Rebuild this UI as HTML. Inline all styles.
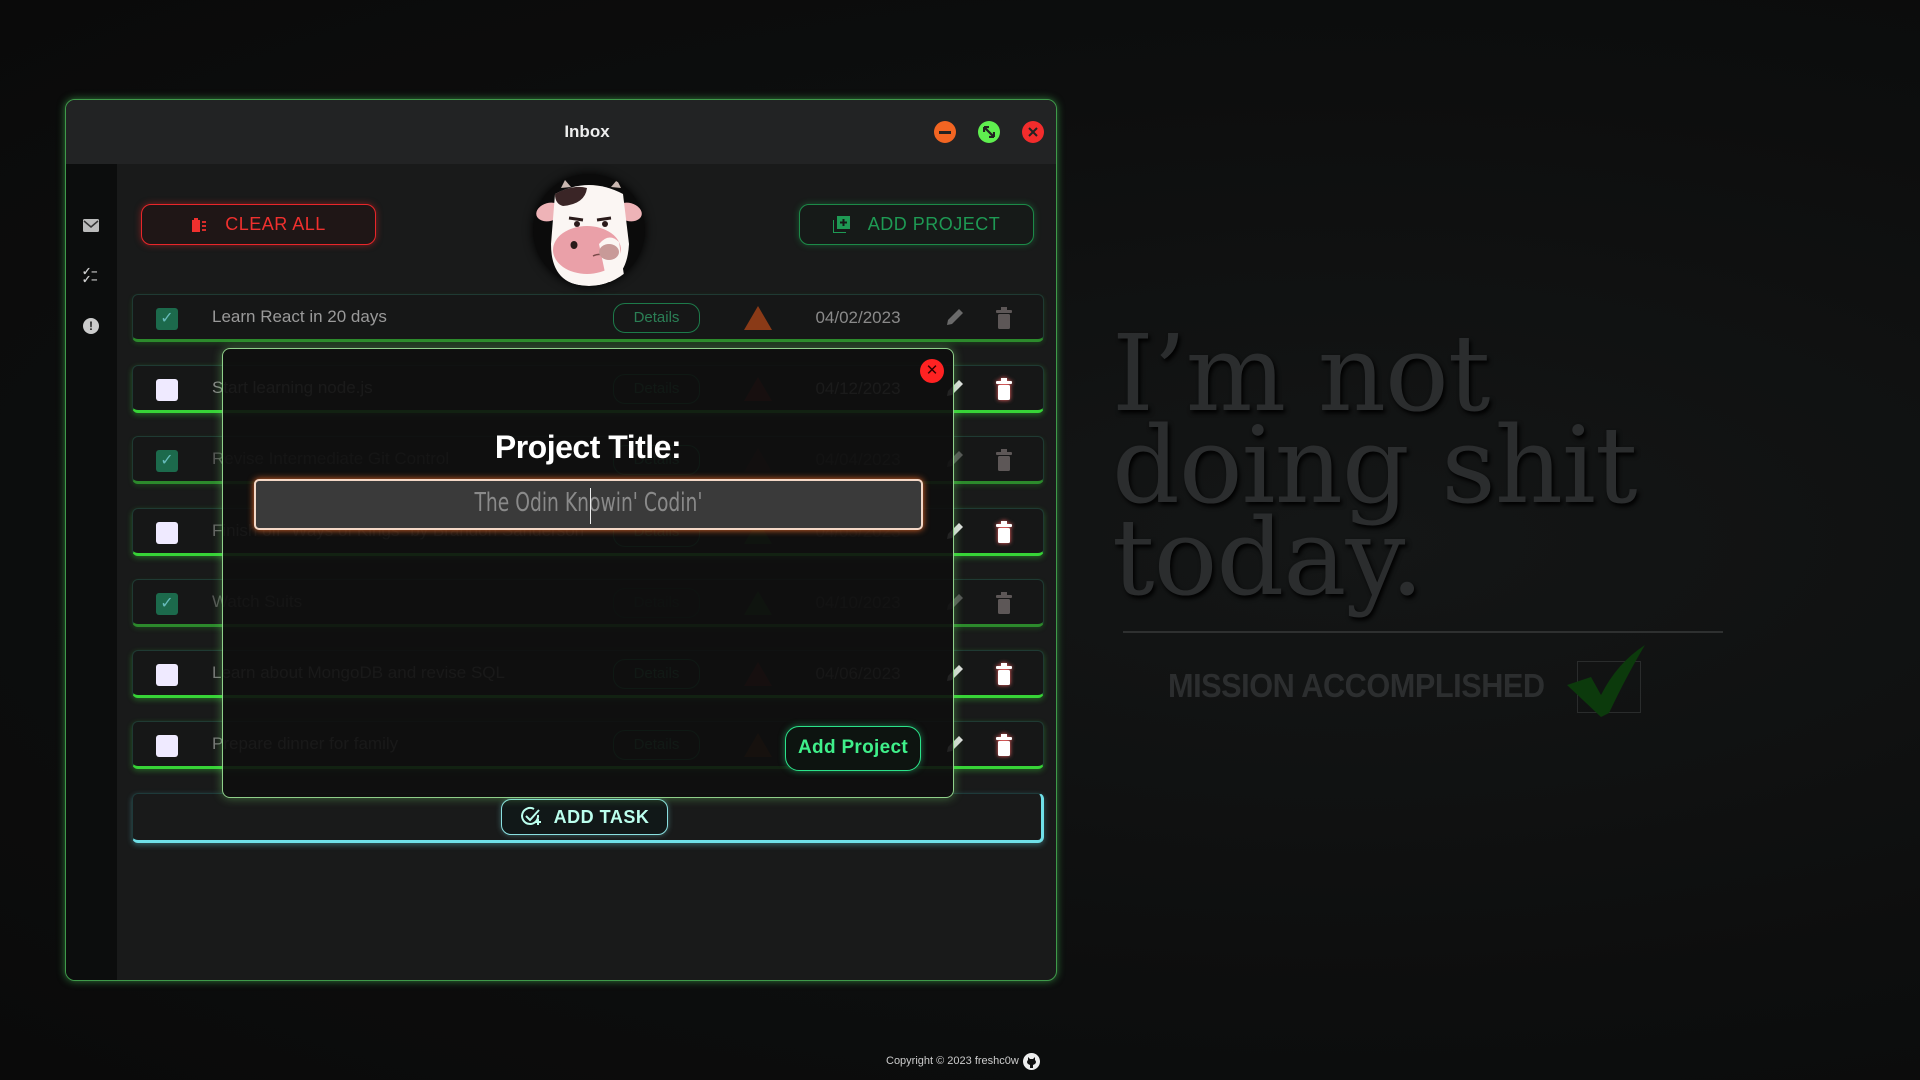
<!DOCTYPE html>
<html><head><meta charset="utf-8">
<style>
*{box-sizing:border-box;margin:0;padding:0}
body{width:1920px;height:1080px;overflow:hidden;background:radial-gradient(ellipse at 70% 50%,#141616 0%,#0d0e0e 60%,#0a0a0a 100%);font-family:"Liberation Sans",sans-serif;position:relative}
.abs{position:absolute}
.win{left:65px;top:99px;width:992px;height:882px;border:1.5px solid #3f9a4a;border-radius:10px;box-shadow:0 0 8px #2f7a3a;background:#191a1a;overflow:hidden}
.tb{left:0;top:0;width:100%;height:64px;background:#222324}
.side{left:0;top:64px;width:51px;height:820px;background:#0c0d0d}
.btn{border-radius:10px;font-size:18px;display:flex;align-items:center;justify-content:center;gap:18px;letter-spacing:.5px}
.row{left:66px;width:912px;height:48px;border:1px solid #1f3a33;border-radius:6px;background:#161717}
.row.u{border-bottom:3px solid #37d437;box-shadow:0 2px 6px rgba(60,220,60,.35)}
.row.c{border-bottom:3px solid #2c8a2c;box-shadow:0 2px 5px rgba(40,160,40,.25)}
.cb{left:23px;top:13px;width:22px;height:22px;border-radius:3px}
.cb.k{background:#1c6a4c;color:#6bb;font-size:16px;text-align:center;line-height:22px}
.txt{left:79px;top:12px;font-size:17px;color:#9a9a9a}
.det{left:480px;top:8px;width:87px;height:30px;border:1px solid #1d7a4a;border-radius:12px;color:#2b7f55;font-size:15px;text-align:center;line-height:28px}
.tri{left:611px;top:11px;width:0;height:0;border-left:14px solid transparent;border-right:14px solid transparent;border-bottom:24px solid}
.date{left:660px;top:13px;width:130px;text-align:center;font-size:17px;color:#8a8a8a}
.pen{left:812px;top:12px}
.tr{left:863px;top:12px}
.modal{left:222px;top:348px;width:732px;height:450px;border:1.5px solid #8fd08a;border-radius:8px;background:rgba(14,14,14,.9);box-shadow:0 0 10px rgba(120,220,110,.45)}
</style></head><body>

<svg width="0" height="0" style="position:absolute">
<defs>
<symbol id="trash" viewBox="0 0 16 22"><rect x="5" y="0" width="6" height="3" fill="currentColor"/><rect x="0" y="3" width="16" height="3" rx="1" fill="currentColor"/><rect x="2" y="7" width="12" height="15" rx="1.5" fill="currentColor"/></symbol>
<symbol id="pen" viewBox="0 0 20 20"><path d="M14 2l4 4L7 17l-5 1 1-5z" fill="currentColor"/></symbol>
</defs></svg>

<div class="abs win">
  <div class="abs tb"></div>
  <div class="abs" style="left:26px;top:22px;width:100%;text-align:center;color:#eee;font-weight:bold;font-size:17px">Inbox</div>
  <div class="abs" style="left:868px;top:21px;width:22px;height:22px;border-radius:50%;background:#f26522"><div class="abs" style="left:5px;top:10px;width:12px;height:2.5px;background:#222"></div></div>
  <div class="abs" style="left:912px;top:21px;width:22px;height:22px;border-radius:50%;background:#5fef4f"><svg class="abs" style="left:5px;top:5px" width="12" height="12"><path d="M1 1L11 11M1 1h5M1 1v5M11 11h-5M11 11v-5" stroke="#222" stroke-width="2.2" fill="none"/></svg></div>
  <div class="abs" style="left:956px;top:21px;width:22px;height:22px;border-radius:50%;background:#f32c2c"><svg class="abs" style="left:6px;top:6px" width="10" height="10"><path d="M1 1L9 9M9 1L1 9" stroke="#222" stroke-width="2"/></svg></div>
  <div class="abs side"></div>
  <svg class="abs" style="left:17px;top:119px" width="16" height="13"><rect width="16" height="13" rx="1.5" fill="#bbb"/><path d="M1 2l7 6 7-6" stroke="#333" stroke-width="1.5" fill="none"/></svg>
  <div class="abs" style="left:16px;top:168px;color:#ccc;font-size:11px;line-height:8px;font-weight:bold">✓–<br>✓–</div>
  <div class="abs" style="left:17px;top:218px;width:16px;height:16px;border-radius:50%;background:#ccc;color:#222;font-weight:bold;font-size:12px;text-align:center;line-height:16px">!</div>

  <div class="abs btn" style="left:75px;top:104px;width:235px;height:41px;border:1.5px solid #e8262a;color:#f0302e;background:#1f1616;box-shadow:0 0 7px rgba(230,40,40,.5)">
    <svg width="16" height="16"><rect x="1" y="3" width="8" height="12" fill="#f0302e"/><rect x="3" y="1" width="4" height="3" fill="#f0302e"/><path d="M11 5h4M11 9h4M11 13h4" stroke="#f0302e" stroke-width="1.8"/></svg>CLEAR ALL</div>
  <div class="abs" style="left:467px;top:74px;width:112px;height:112px;border-radius:50%;background:#0b0b0b;box-shadow:0 0 10px #000;overflow:hidden">
    <svg width="112" height="112" viewBox="0 0 112 112">
      <path d="M28 14l4-8 6 7z M78 13l6-7 4 8z" fill="#c9b7b0"/>
      <ellipse cx="16" cy="38" rx="13" ry="9" fill="#eeb3b7" transform="rotate(-15 16 38)"/>
      <ellipse cx="96" cy="38" rx="13" ry="9" fill="#eeb3b7" transform="rotate(15 96 38)"/>
      <path d="M22 20Q56 2 90 20L96 70Q94 112 56 112Q18 112 18 70Z" fill="#fbf6f3"/>
      <path d="M22 20Q40 10 54 14Q52 30 30 32Q22 30 22 20z" fill="#3a2526"/>
      <path d="M36 44l14 2M64 46l14-2" stroke="#2a1a1a" stroke-width="3"/>
      <circle cx="44" cy="50" r="3" fill="#2a1a1a"/><circle cx="72" cy="50" r="3" fill="#2a1a1a"/>
      <ellipse cx="54" cy="76" rx="34" ry="24" fill="#eaa0a8"/>
      <ellipse cx="41" cy="71" rx="3.5" ry="4" fill="#2a1a1a"/>
      <path d="M60 82q8-4 14 2" stroke="#7a4a4a" stroke-width="1.5" fill="none"/>
      <path d="M66 70q10-12 20-2l6 40h-18z" fill="#fbf6f3"/>
      <ellipse cx="76" cy="78" rx="10" ry="8" fill="#c89a98"/>
    </svg>
  </div>
  <div class="abs btn" style="left:733px;top:104px;width:235px;height:41px;border:1.5px solid #1c8a48;color:#1e9a54;background:#161a18;box-shadow:0 0 7px rgba(30,160,80,.45)">
    <svg width="17" height="17"><rect x="4" y="0" width="13" height="13" fill="#1e9a54"/><path d="M0 4v13h13" stroke="#1e9a54" stroke-width="2" fill="none"/><path d="M10.5 3v7M7 6.5h7" stroke="#161a18" stroke-width="2"/></svg>ADD PROJECT</div>

  <div class="abs row c" style="top:194px"><div class="abs cb k">✓</div><div class="abs txt">Learn React in 20 days</div><div class="abs det">Details</div><div class="abs tri" style="border-bottom-color:#8a3a17"></div><div class="abs date">04/02/2023</div><svg class="abs pen" width="20" height="20" style="color:#6a6a6a"><use href="#pen"/></svg><svg class="abs tr" width="16" height="22" style="color:#5d5757"><use href="#trash"/></svg></div>
  <div class="abs row u" style="top:265px"><div class="abs cb" style="background:#efeaff"></div><div class="abs txt" style="color:#888">Start learning node.js</div><div class="abs det">Details</div><div class="abs tri" style="border-bottom-color:#6a1a1a"></div><div class="abs date">04/12/2023</div><svg class="abs pen" width="20" height="20" style="color:#ddd"><use href="#pen"/></svg><svg class="abs tr" width="16" height="22" style="color:#fff;filter:drop-shadow(0 0 2px #f66)"><use href="#trash"/></svg></div>
  <div class="abs row c" style="top:336px"><div class="abs cb k">✓</div><div class="abs txt" style="color:#555">Revise Intermediate Git Control</div><div class="abs det">Details</div><div class="abs tri" style="border-bottom-color:#3a1414"></div><div class="abs date" style="color:#444">04/04/2023</div><svg class="abs pen" width="20" height="20" style="color:#555"><use href="#pen"/></svg><svg class="abs tr" width="16" height="22" style="color:#5d5757"><use href="#trash"/></svg></div>
  <div class="abs row u" style="top:408px"><div class="abs cb" style="background:#efeaff"></div><div class="abs txt" style="color:#666">Finish off "Ways of Kings" by Brandon Sanderson</div><div class="abs det">Details</div><div class="abs tri" style="border-bottom-color:#1a4a1a"></div><div class="abs date" style="color:#444">04/05/2023</div><svg class="abs pen" width="20" height="20" style="color:#ddd"><use href="#pen"/></svg><svg class="abs tr" width="16" height="22" style="color:#fff;filter:drop-shadow(0 0 2px #f66)"><use href="#trash"/></svg></div>
  <div class="abs row c" style="top:479px"><div class="abs cb k">✓</div><div class="abs txt" style="color:#555">Watch Suits</div><div class="abs det" style="border-color:#123a26;color:#1a3a2a">Details</div><div class="abs tri" style="border-bottom-color:#1a4a1a"></div><div class="abs date" style="color:#444">04/10/2023</div><svg class="abs pen" width="20" height="20" style="color:#555"><use href="#pen"/></svg><svg class="abs tr" width="16" height="22" style="color:#5d5757"><use href="#trash"/></svg></div>
  <div class="abs row u" style="top:550px"><div class="abs cb" style="background:#efeaff"></div><div class="abs txt" style="color:#777">Learn about MongoDB and revise SQL</div><div class="abs det">Details</div><div class="abs tri" style="border-bottom-color:#5a1616"></div><div class="abs date" style="color:#666">04/06/2023</div><svg class="abs pen" width="20" height="20" style="color:#ddd"><use href="#pen"/></svg><svg class="abs tr" width="16" height="22" style="color:#fff;filter:drop-shadow(0 0 2px #f66)"><use href="#trash"/></svg></div>
  <div class="abs row u" style="top:621px"><div class="abs cb" style="background:#efeaff"></div><div class="abs txt" style="color:#777">Prepare dinner for family</div><div class="abs det">Details</div><div class="abs tri" style="border-bottom-color:#5a2a10"></div><div class="abs date" style="color:#555">04/03/2023</div><svg class="abs pen" width="20" height="20" style="color:#ddd"><use href="#pen"/></svg><svg class="abs tr" width="16" height="22" style="color:#fff;filter:drop-shadow(0 0 2px #f66)"><use href="#trash"/></svg></div>

  <div class="abs" style="left:66px;top:693px;width:912px;height:50px;border:1px solid #1e3a3a;border-bottom:3px solid #6fe0e8;border-right:3px solid #6fe0e8;border-radius:6px;box-shadow:0 2px 6px rgba(100,220,230,.35)"></div>
  <div class="abs btn" style="left:435px;top:699px;width:167px;height:36px;border:1.5px solid #8adfe0;background:#111818;color:#bfe;font-weight:bold;font-size:18px;gap:12px;box-shadow:0 0 6px rgba(120,220,220,.4)">
    <svg width="22" height="22"><path d="M18 9a8 8 0 1 1-4-6" stroke="#bfe" stroke-width="2" fill="none"/><path d="M6 10l4 4 9-10M15 16h6M18 13v6" stroke="#bfe" stroke-width="2" fill="none"/></svg>ADD TASK</div>
</div>

<div class="abs modal">
  <div class="abs" style="left:697px;top:10px;width:24px;height:24px;border-radius:50%;background:#f22;color:#300;font-size:15px;text-align:center;line-height:23px">✕</div>
  <div class="abs" style="left:0;top:80px;width:100%;text-align:center;color:#fff;font-weight:bold;font-size:32px;letter-spacing:-.5px">Project Title:</div>
  <div class="abs" style="left:31px;top:130px;width:669px;height:51px;background:#3a3a3a;border:2px solid #f3d7c6;border-radius:5px;box-shadow:0 0 7px #e86a2a">
    <div class="abs" style="left:0;top:7px;width:100%;text-align:center;color:#8a8a8a;font-family:'DejaVu Sans Condensed','Liberation Sans Narrow',sans-serif;font-size:26px;font-weight:200;transform:scaleX(.8)">The Odin Knowin' Codin'</div>
    <div class="abs" style="left:334px;top:7px;width:1px;height:36px;background:#eee"></div>
  </div>
  <div class="abs" style="left:562px;top:377px;width:136px;height:45px;border:1.5px solid #2be38a;border-radius:14px;background:#0d1410;box-shadow:0 0 7px rgba(40,220,130,.5);color:#3ff08a;font-weight:bold;font-size:19px;text-align:center;line-height:42px;letter-spacing:.3px">Add Project</div>
</div>

<div class="abs" style="left:1112px;top:328px;font-family:'DejaVu Serif','Liberation Serif',serif;font-size:106px;line-height:92px;color:#2b2d2e;text-shadow:2px 3px 4px #000;letter-spacing:-1px">I’m not<br>doing shit<br>today.</div>
<div class="abs" style="left:1123px;top:631px;width:600px;height:2px;background:#2e3030"></div>
<div class="abs" style="left:1168px;top:667px;font-weight:bold;font-size:33px;color:#2c2e2f;transform:scaleX(.93);transform-origin:left;letter-spacing:-.5px">MISSION ACCOMPLISHED</div>
<div class="abs" style="left:1577px;top:661px;width:64px;height:52px;border:1px solid #2a2c2c"></div>
<svg class="abs" style="left:1565px;top:645px" width="80" height="72"><path d="M2 40L26 32 36 50 Q52 18 80 0 Q62 30 44 68 L36 72Z" fill="#0c3a0c"/></svg>

<div class="abs" style="left:886px;top:1055px;color:#ccc;font-size:11px">Copyright © 2023 freshc0w</div>
<div class="abs" style="left:1023px;top:1053px;width:17px;height:17px;border-radius:50%;background:#eee"><svg class="abs" style="left:3px;top:3px" width="11" height="12"><path d="M2 1l2 2h3l2-2v3q2 2 0 4l-2 1v3H4V9L2 8Q0 6 2 4z" fill="#111"/></svg></div>
</body></html>
